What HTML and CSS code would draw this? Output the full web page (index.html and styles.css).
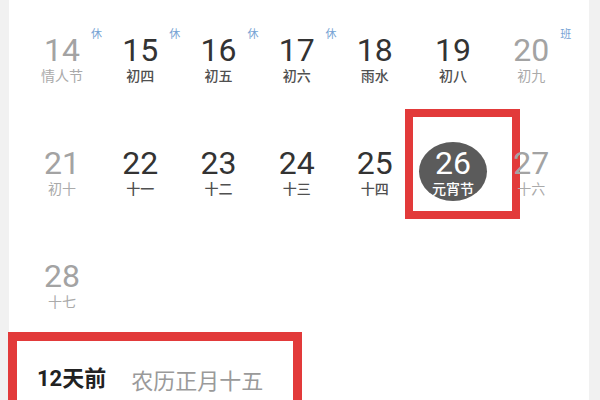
FILE: index.html
```html
<!DOCTYPE html>
<html lang="zh-CN">
<head>
<meta charset="utf-8">
<link rel="stylesheet" href="styles.css">
</head>
<body>
<div class="page">
  <div class="edge edge-left"></div>
  <main class="main">
    <div class="grid">
      <div class="cell muted"><span class="tag">休</span><span class="num">14</span><span class="lunar">情人节</span></div>
      <div class="cell"><span class="tag">休</span><span class="num">15</span><span class="lunar">初四</span></div>
      <div class="cell"><span class="tag">休</span><span class="num">16</span><span class="lunar">初五</span></div>
      <div class="cell"><span class="tag">休</span><span class="num">17</span><span class="lunar">初六</span></div>
      <div class="cell"><span class="num">18</span><span class="lunar">雨水</span></div>
      <div class="cell"><span class="num">19</span><span class="lunar">初八</span></div>
      <div class="cell muted"><span class="tag">班</span><span class="num">20</span><span class="lunar">初九</span></div>

      <div class="cell muted"><span class="num">21</span><span class="lunar">初十</span></div>
      <div class="cell"><span class="num">22</span><span class="lunar">十一</span></div>
      <div class="cell"><span class="num">23</span><span class="lunar">十二</span></div>
      <div class="cell"><span class="num">24</span><span class="lunar">十三</span></div>
      <div class="cell"><span class="num">25</span><span class="lunar">十四</span></div>
      <div class="cell selected"><span class="dot"></span><span class="num">26</span><span class="lunar">元宵节</span><span class="mark mark-day"></span></div>
      <div class="cell muted"><span class="num">27</span><span class="lunar">十六</span></div>

      <div class="cell muted"><span class="num">28</span><span class="lunar">十七</span></div>
    </div>
    <div class="footer">
      <span class="ago">12天前</span>
      <span class="date">农历正月十五</span>
      <span class="mark mark-foot"></span>
    </div>
  </main>
  <div class="edge edge-right"></div>
</div>
</body>
</html>
```

FILE: styles.css
```css
html, body {
  margin: 0;
  padding: 0;
  background: #ffffff;
}

.page {
  width: 600px;
  height: 400px;
  overflow: hidden;
  display: flex;
  font-family: Roboto, "Noto Sans CJK SC", sans-serif;
}

.edge {
  flex: none;
  background: #f1f1f1;
}
.edge-left { width: 9px; }
.edge-right { width: 11px; }

.main {
  flex: 1;
  position: relative;
  padding-top: 35px;
}

.grid {
  display: grid;
  grid-template-columns: repeat(7, 78.2px);
  grid-template-rows: 113px 113px auto;
  padding-left: 14px;
}

.cell {
  position: relative;
  display: flex;
  flex-direction: column;
  align-items: center;
}

.num {
  position: relative;
  font-size: 32px;
  line-height: 31px;
  color: #333333;
  font-weight: 400;
}

.lunar {
  position: relative;
  margin-top: 2px;
  font-family: "Noto Sans CJK SC", sans-serif;
  font-size: 14px;
  line-height: 14px;
  color: #505050;
  font-weight: 500;
}

.muted .num { color: #a3a3a3; }
.muted .lunar { color: #aaaaaa; font-weight: 400; }

.tag {
  position: absolute;
  left: 68px;
  top: -8px;
  font-family: "Noto Sans CJK SC", sans-serif;
  font-size: 11px;
  line-height: 12px;
  color: #76a3d4;
}

.dot {
  position: absolute;
  left: 5px;
  top: -6px;
  width: 68px;
  height: 59px;
  border-radius: 50%;
  background: #5b5b5b;
}
.selected .num,
.selected .lunar { color: #ffffff; }

.mark {
  position: absolute;
  border: 8px solid #e23a3a;
  box-sizing: border-box;
}
.mark-day {
  left: -9px;
  top: -39px;
  width: 115px;
  height: 110px;
}

.footer {
  position: relative;
  display: flex;
  gap: 25px;
  padding: 59px 0 0 28px;
  font-family: "Noto Sans CJK SC", sans-serif;
  font-size: 22px;
  line-height: 24px;
}
.ago {
  color: #222222;
  font-weight: 700;
  font-family: Roboto, "Noto Sans CJK SC", sans-serif;
}
.date {
  color: #9a9a9a;
}
.mark-foot {
  left: -1px;
  top: 24px;
  width: 294px;
  height: 120px;
  border-width: 9px;
}
```
